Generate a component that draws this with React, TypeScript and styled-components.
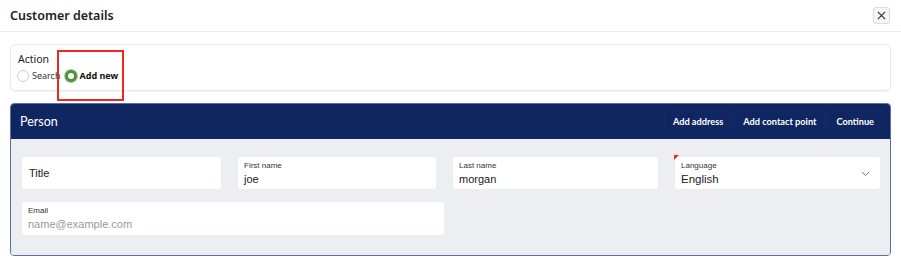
import React from "react";
import styled, { createGlobalStyle } from "styled-components";

const GlobalStyle = createGlobalStyle`
  html, body {
    margin: 0;
    padding: 0;
    background: #fff;
    font-family: 'Liberation Sans', Arial, sans-serif;
  }
`;

export default function App() {
  return (
    <>
      <GlobalStyle />
      <Page>
        <Header>
          <Title>Customer details</Title>
          <CloseButton aria-label="Close">
            <svg width="9" height="9" viewBox="0 0 10 10">
              <path d="M1 1L9 9M9 1L1 9" stroke="#333" strokeWidth="1.3" />
            </svg>
          </CloseButton>
        </Header>

        <ActionCard>
          <ActionLabel>Action</ActionLabel>
          <RadioRow>
            <RadioOption>
              <Radio />
              <span>Search</span>
            </RadioOption>
            <RadioOption $selected>
              <Radio $selected />
              <span>Add new</span>
            </RadioOption>
          </RadioRow>
          <Highlight />
        </ActionCard>

        <Panel>
          <PanelHeader>
            <PanelTitle>Person</PanelTitle>
            <Actions>
              <HeaderButton>Add address</HeaderButton>
              <HeaderButton>Add contact point</HeaderButton>
              <HeaderButton>Continue</HeaderButton>
            </Actions>
          </PanelHeader>
          <PanelBody>
            <Field>
              <Plain>Title</Plain>
            </Field>
            <Field>
              <Label>First name</Label>
              <Value>joe</Value>
            </Field>
            <Field>
              <Label>Last name</Label>
              <Value>morgan</Value>
            </Field>
            <Field $required>
              <Label>Language</Label>
              <Value $large>English</Value>
              <Chevron width="9" height="6" viewBox="0 0 9 6">
                <path d="M1 1L4.5 4.5L8 1" fill="none" stroke="#777" strokeWidth="1" />
              </Chevron>
            </Field>
            <Field $wide>
              <Label>Email</Label>
              <Value $placeholder>name@example.com</Value>
            </Field>
          </PanelBody>
        </Panel>
      </Page>
    </>
  );
}

const Page = styled.div`
  width: 901px;
  height: 264px;
  overflow: hidden;
`;

const Header = styled.div`
  height: 32px;
  padding: 0 11px 0 10px;
  display: flex;
  align-items: center;
  justify-content: space-between;
  border-bottom: 1px solid #ececec;
  box-sizing: border-box;
`;

const Title = styled.h1`
  margin: 0;
  font-family: 'Noto Sans', sans-serif;
  font-size: 12.5px;
  font-weight: 600;
  color: #222;
`;

const CloseButton = styled.button`
  width: 17px;
  height: 17px;
  padding: 0;
  display: flex;
  align-items: center;
  justify-content: center;
  background: #f6f6f6;
  border: 1px solid #dcdcdc;
  border-radius: 3px;
`;

const ActionCard = styled.div`
  position: relative;
  margin: 12px 10px 0;
  height: 47px;
  box-sizing: border-box;
  padding: 7px 7px 0;
  border: 1px solid #e8e8e8;
  border-radius: 5px;
  box-shadow: 0 1px 2px rgba(0, 0, 0, 0.05);
`;

const ActionLabel = styled.div`
  font-family: 'Noto Sans', sans-serif;
  font-size: 10.5px;
  line-height: 14px;
  color: #222;
`;

const RadioRow = styled.div`
  display: flex;
  gap: 4px;
  margin-top: 3px;
  margin-left: -1px;
`;

const RadioOption = styled.label<{ $selected?: boolean }>`
  display: flex;
  align-items: center;
  gap: 3px;
  font-family: 'Noto Sans', sans-serif;
  font-size: 9px;
  line-height: 14px;
  font-weight: ${(p) => (p.$selected ? 700 : 400)};
  color: ${(p) => (p.$selected ? "#111" : "#333")};
`;

const Radio = styled.span<{ $selected?: boolean }>`
  width: 12px;
  height: 12px;
  box-sizing: border-box;
  border-radius: 50%;
  background: #fff;
  border: ${(p) => (p.$selected ? "3.5px solid #4f8f3d" : "1px solid #cfcfcf")};
  box-shadow: ${(p) => (p.$selected ? "0 0 0 1px #a9c99e" : "none")};
`;

const Highlight = styled.div`
  position: absolute;
  left: 46px;
  top: 5px;
  width: 67px;
  height: 51px;
  box-sizing: border-box;
  border: 2px solid #ea2a1f;
`;

const Panel = styled.div`
  margin: 12px 10px 0;
  border: 1px solid #5b6ca6;
  border-radius: 4px;
  overflow: hidden;
`;

const PanelHeader = styled.div`
  height: 35px;
  background: #0f2661;
  display: flex;
  align-items: center;
  justify-content: space-between;
  padding: 0 7px 0 9px;
`;

const PanelTitle = styled.div`
  font-family: Lato, sans-serif;
  font-size: 12.5px;
  color: #fff;
`;

const Actions = styled.div`
  display: flex;
  gap: 2px;
`;

const HeaderButton = styled.button`
  height: 22px;
  padding: 0 8px;
  background: #0f2661;
  border: 1px solid #132b68;
  border-radius: 2px;
  font-family: Lato, sans-serif;
  font-weight: 700;
  font-size: 9.2px;
  color: #fff;
`;

const PanelBody = styled.div`
  background: #eceef2;
  padding: 18px 11px 20px 11px;
  display: grid;
  grid-template-columns: 199px 198px 205px 205px;
  column-gap: 17px;
  row-gap: 13px;
`;

const Field = styled.div<{ $wide?: boolean; $required?: boolean }>`
  position: relative;
  height: ${(p) => (p.$wide ? "33px" : "32px")};
  box-sizing: border-box;
  background: #fff;
  border-radius: 3px;
  padding: 4px 6px 0;
  ${(p) => p.$wide && "grid-column: 1 / span 2; width: 422px;"}
  &::before {
    content: '';
    display: ${(p) => (p.$required ? "block" : "none")};
    position: absolute;
    left: -1px;
    top: -2px;
    border-top: 5px solid #e0302a;
    border-right: 5px solid transparent;
  }
`;

const Plain = styled.div`
  font-size: 11px;
  line-height: 24px;
  color: #222;
  padding-left: 1px;
`;

const Label = styled.div`
  font-size: 8px;
  line-height: 10px;
  color: #333;
`;

const Value = styled.div<{ $placeholder?: boolean; $large?: boolean }>`
  font-size: ${(p) => (p.$large ? "11.5px" : "11px")};
  line-height: 15px;
  margin-top: 1px;
  color: ${(p) => (p.$placeholder ? "#9a9a9a" : "#222")};
`;

const Chevron = styled.svg`
  position: absolute;
  right: 10px;
  top: 14px;
`;
